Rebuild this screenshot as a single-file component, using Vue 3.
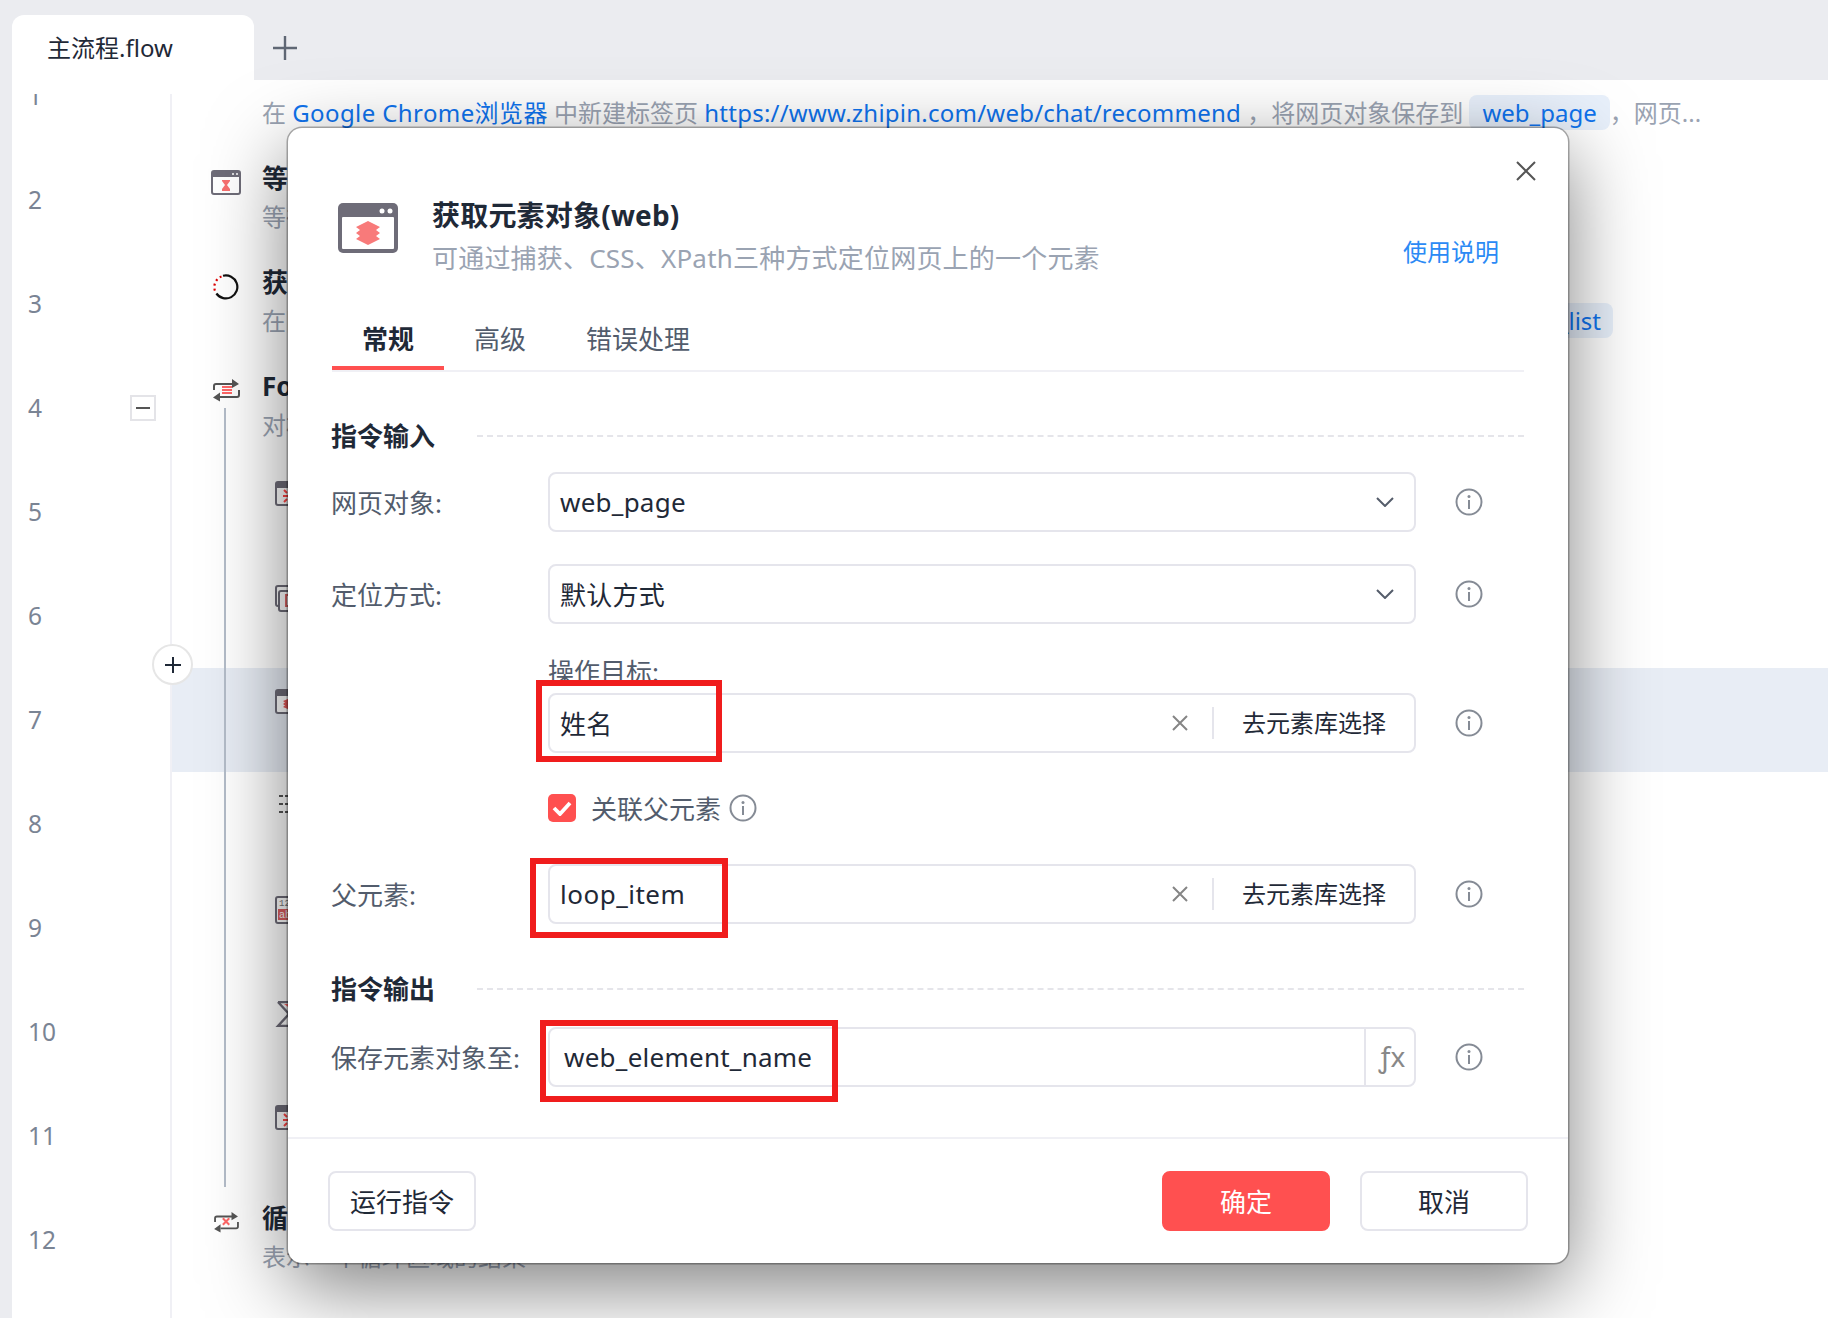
<script setup>
const rows = [
  { no: 1, icon: '', title: '打开网页', desc: '' },
  { no: 2, icon: 'wait', title: '等待元素(web)', desc: '等待元素出现' },
  { no: 3, icon: 'ring', title: '获取相似元素列表(web)', desc: '在网页中获取相似元素列表', tag: 'web_element_list' },
  { no: 4, icon: 'loop', title: 'ForEach循环相似元素(web)', desc: '对相似元素列表循环', fold: true },
  { no: 5, icon: 'click', nested: true, title: '点击元素(web)', desc: '点击元素' },
  { no: 6, icon: 'frame', nested: true, title: '切换窗口', desc: '切换窗口' },
  { no: 7, icon: 'layers', nested: true, active: true, title: '获取元素对象(web)', desc: '获取元素对象' },
  { no: 8, icon: 'list', nested: true, title: '列表', desc: '列表' },
  { no: 9, icon: 'text', nested: true, title: '获取文本', desc: '获取文本' },
  { no: 10, icon: 'sigma', nested: true, title: '求和', desc: '求和' },
  { no: 11, icon: 'click', nested: true, title: '点击元素(web)', desc: '点击元素' },
  { no: 12, icon: 'loopEnd', title: '循环结束', desc: '表示一个循环区域的结束' },
  { no: 13, icon: '', title: '', desc: '' }
]
</script>

<template>
  <div class="page">
    <header class="tabbar">
      <div class="file-tab">主流程.flow</div>
      <svg class="add-tab" width="24" height="24" viewBox="0 0 24 24"><path d="M12 0v24M0 12h24" stroke="#5f6774" stroke-width="2.4" /></svg>
    </header>

    <section class="editor">
      <div class="list">
        <span class="tree-line"></span>
        <div v-for="row in rows" :key="row.no" class="row">
          <div class="gutter">
            <span class="num">{{ row.no }}</span>
            <span v-if="row.fold" class="fold"><i></i></span>
            <span v-if="row.active" class="insert">
              <svg width="16" height="16" viewBox="0 0 16 16"><path d="M8 0v16M0 8h16" stroke="#1f2937" stroke-width="2" /></svg>
            </span>
          </div>
          <div class="cmd" :class="{ 'cmd-active': row.active, 'cmd-nested': row.nested }">
            <div class="cmd-icon">
              <svg v-if="row.icon === 'wait'" width="30" height="25" viewBox="0 0 30 25">
                <rect x="1" y="1" width="28" height="23" rx="2" fill="#fff" stroke="#6e6c78" stroke-width="2" />
                <rect x="1" y="1" width="28" height="6" fill="#6e6c78" />
                <circle cx="22" cy="4" r="1" fill="#fff" /><circle cx="26" cy="4" r="1" fill="#fff" />
                <path d="M11 10h8v1l-3 4 3 4v2h-8v-2l3-4-3-4z" fill="#f87070" />
              </svg>
              <svg v-else-if="row.icon === 'ring'" class="shift-x" width="26" height="26" viewBox="0 0 26 26">
                <path d="M10 1.800A11.500 11.500 0 1 1 3.400 19.500" fill="none" stroke="#111" stroke-width="2.200" />
                <path d="M8.500 2.500A11.500 11.500 0 0 0 2.400 18" fill="none" stroke="#d00" stroke-width="2.200" stroke-dasharray="2 3" />
              </svg>
              <svg v-else-if="row.icon === 'loop' || row.icon === 'loopEnd'" class="shift-x" :class="{ 'loop-end': row.icon === 'loopEnd' }" width="27" height="24" viewBox="0 0 27 24">
                <path d="M1 12V8a2 2 0 0 1 2-2h17M26 12v5a2 2 0 0 1-2 2H7" fill="none" stroke="#555" stroke-width="2" />
                <path d="M19 1l7 5-7 4zM7 14.500l-7 5 7 4z" fill="#555" />
                <path v-if="row.icon === 'loop'" d="M9 9h10M9 12h10M9 15h10" stroke="#f66" stroke-width="2" />
                <path v-else d="M9.500 8l7 7M16.500 8l-7 7" stroke="#f66" stroke-width="2.200" />
              </svg>
              <svg v-else-if="row.icon === 'click'" width="30" height="25" viewBox="0 0 30 25">
                <rect x="1" y="1" width="28" height="23" rx="2" fill="#fff" stroke="#6e6c78" stroke-width="2" />
                <rect x="1" y="1" width="28" height="6" fill="#6e6c78" />
                <path d="M9 9l3 3M8 15h5M9 21l3-3" stroke="#f44" stroke-width="2" />
              </svg>
              <svg v-else-if="row.icon === 'frame'" width="30" height="27" viewBox="0 0 30 27">
                <rect x="1" y="1" width="26" height="20" rx="2" fill="#fff" stroke="#6e6c78" stroke-width="2" />
                <rect x="4" y="6" width="25" height="20" rx="2" fill="#fff" stroke="#6e6c78" stroke-width="2" />
                <rect x="11" y="10" width="8" height="11" fill="none" stroke="#d66" stroke-width="2" />
              </svg>
              <svg v-else-if="row.icon === 'layers'" width="30" height="25" viewBox="0 0 30 25">
                <rect x="1" y="1" width="28" height="23" rx="2" fill="#fff" stroke="#6e6c78" stroke-width="2" />
                <rect x="1" y="1" width="28" height="6" fill="#6e6c78" />
                <path d="M15 9l7 3-2 1.500 2 1.500-2 1.500 2 1.500-7 3-7-3 2-1.500-2-1.500 2-1.500-2-1.500z" fill="#e85a5a" />
              </svg>
              <svg v-else-if="row.icon === 'list'" width="30" height="22" viewBox="0 0 30 22">
                <path d="M4 3h4M10 3h18M4 11h4M10 11h18M4 19h4M10 19h18" stroke="#555" stroke-width="2" />
              </svg>
              <svg v-else-if="row.icon === 'text'" class="icon-up" width="30" height="28" viewBox="0 0 30 28">
                <rect x="1" y="1" width="28" height="26" rx="2" fill="#fff" stroke="#6e6c78" stroke-width="2" />
                <rect x="3" y="13" width="24" height="11" fill="#dc5f5f" />
                <text x="4" y="10" font-size="9" fill="#777" font-family="Liberation Mono, monospace">123</text>
                <text x="4" y="22" font-size="10" fill="#fff" font-family="Liberation Mono, monospace">abc</text>
              </svg>
              <svg v-else-if="row.icon === 'sigma'" width="30" height="26" viewBox="0 0 30 26">
                <path d="M3 1h25M3 1l11 12L3 25h25" fill="none" stroke="#6e6c78" stroke-width="2.400" />
                <path d="M9 3h12l-5 5z" fill="#f66" />
              </svg>
            </div>
            <div class="cmd-text">
              <div class="cmd-title">{{ row.title }}</div>
              <div v-if="row.no === 1" class="cmd-desc">
                在 <a class="app-link">Google Chrome浏览器</a> 中新建标签页 <a>https://www.zhipin.com/web/chat/recommend</a> ，将网页对象保存到
                <span class="var var-wide">web_page</span>，网页...
              </div>
              <div v-else class="cmd-desc" :class="{ 'desc-wide': row.tag }">
                <span>{{ row.desc }}</span>
                <span v-if="row.tag" class="var">{{ row.tag }}</span>
              </div>
            </div>
          </div>
        </div>
      </div>
    </section>

    <div class="dialog">
      <svg class="close" width="20" height="20" viewBox="0 0 20 20"><path d="M1 1l18 18M19 1L1 19" stroke="#555" stroke-width="2" /></svg>

      <div class="dialog-head">
        <svg class="dialog-icon" width="60" height="50" viewBox="0 0 60 50">
          <rect width="60" height="50" rx="5" fill="#6e6c78" />
          <rect x="4" y="14" width="52" height="32" rx="1" fill="#fff" />
          <circle cx="44" cy="8" r="2.500" fill="#fff" /><circle cx="52" cy="8" r="2.500" fill="#fff" />
          <path d="M30 18l12 6-4 3 4 3-4 3 4 3-12 6-12-6 4-3-4-3 4-3-4-3z" fill="#f87a7a" />
        </svg>
        <div class="dialog-titles">
          <div class="dialog-title">获取元素对象(web)</div>
          <div class="dialog-sub">可通过捕获、CSS、XPath三种方式定位网页上的一个元素</div>
        </div>
        <a class="help">使用说明</a>
      </div>

      <div class="dialog-body">
        <div class="tabs">
          <div class="tab tab-on">常规</div>
          <div class="tab">高级</div>
          <div class="tab">错误处理</div>
        </div>

        <div class="section section-first"><span>指令输入</span><i></i></div>

        <div class="field field-first">
          <label>网页对象:</label>
          <div class="control">
            <span class="value">web_page</span>
            <svg class="chevron" width="18" height="10" viewBox="0 0 18 10"><path d="M1 1l8 8 8-8" fill="none" stroke="#555d6b" stroke-width="2" /></svg>
          </div>
          <svg class="info" width="28" height="28" viewBox="0 0 28 28"><circle cx="14" cy="14" r="12.500" fill="none" stroke="#858b95" stroke-width="2" /><path d="M14 12v9" stroke="#858b95" stroke-width="2" /><circle cx="14" cy="8.500" r="1.500" fill="#858b95" /></svg>
        </div>

        <div class="field field-second">
          <label>定位方式:</label>
          <div class="control">
            <span class="value">默认方式</span>
            <svg class="chevron" width="18" height="10" viewBox="0 0 18 10"><path d="M1 1l8 8 8-8" fill="none" stroke="#555d6b" stroke-width="2" /></svg>
          </div>
          <svg class="info" width="28" height="28" viewBox="0 0 28 28"><circle cx="14" cy="14" r="12.500" fill="none" stroke="#858b95" stroke-width="2" /><path d="M14 12v9" stroke="#858b95" stroke-width="2" /><circle cx="14" cy="8.500" r="1.500" fill="#858b95" /></svg>
        </div>

        <div class="stack-label">操作目标:</div>
        <div class="field field-tight">
          <label></label>
          <div class="control">
            <span class="value">姓名</span>
            <svg class="clear" width="16" height="16" viewBox="0 0 16 16"><path d="M1 1l14 14M15 1L1 15" stroke="#858585" stroke-width="2" /></svg>
            <span class="pick">去元素库选择</span>
          </div>
          <svg class="info" width="28" height="28" viewBox="0 0 28 28"><circle cx="14" cy="14" r="12.500" fill="none" stroke="#858b95" stroke-width="2" /><path d="M14 12v9" stroke="#858b95" stroke-width="2" /><circle cx="14" cy="8.500" r="1.500" fill="#858b95" /></svg>
        </div>

        <div class="check-row">
          <span class="check">
            <svg width="20" height="16" viewBox="0 0 20 16"><path d="M2 8l6 6L18 3" fill="none" stroke="#fff" stroke-width="3.800" /></svg>
          </span>
          <span class="check-text">关联父元素</span>
          <svg width="28" height="28" viewBox="0 0 28 28"><circle cx="14" cy="14" r="12.500" fill="none" stroke="#858b95" stroke-width="2" /><path d="M14 12v9" stroke="#858b95" stroke-width="2" /><circle cx="14" cy="8.500" r="1.500" fill="#858b95" /></svg>
        </div>

        <div class="field field-parent">
          <label>父元素:</label>
          <div class="control">
            <span class="value value-loop">loop_item</span>
            <svg class="clear" width="16" height="16" viewBox="0 0 16 16"><path d="M1 1l14 14M15 1L1 15" stroke="#858585" stroke-width="2" /></svg>
            <span class="pick">去元素库选择</span>
          </div>
          <svg class="info" width="28" height="28" viewBox="0 0 28 28"><circle cx="14" cy="14" r="12.500" fill="none" stroke="#858b95" stroke-width="2" /><path d="M14 12v9" stroke="#858b95" stroke-width="2" /><circle cx="14" cy="8.500" r="1.500" fill="#858b95" /></svg>
        </div>

        <div class="section section-out"><span>指令输出</span><i></i></div>

        <div class="field field-output">
          <label>保存元素对象至:</label>
          <div class="control control-fx">
            <span class="value value-out">web_element_name</span>
            <span class="fx">ƒx</span>
          </div>
          <svg class="info" width="28" height="28" viewBox="0 0 28 28"><circle cx="14" cy="14" r="12.500" fill="none" stroke="#858b95" stroke-width="2" /><path d="M14 12v9" stroke="#858b95" stroke-width="2" /><circle cx="14" cy="8.500" r="1.500" fill="#858b95" /></svg>
        </div>
      </div>

      <div class="dialog-foot">
        <button class="btn btn-run">运行指令</button>
        <button class="btn btn-ok">确定</button>
        <button class="btn btn-cancel">取消</button>
      </div>
    </div>

    <span class="mark mark-a"></span>
    <span class="mark mark-b"></span>
    <span class="mark mark-c"></span>
  </div>
</template>

<style scoped>
.page {
  position: relative;
  display: flex;
  flex-direction: column;
  width: 1828px;
  height: 1318px;
  overflow: hidden;
  background: #ebecf0;
  color: #1f2937;
  font-family: "Noto Sans", "Noto Sans CJK SC", sans-serif;
  font-size: 26px;
}

.tabbar {
  display: flex;
  align-items: center;
  flex-shrink: 0;
  height: 65px;
  margin-top: 15px;
  padding-left: 12px;
}

.file-tab {
  width: 242px;
  height: 65px;
  padding-left: 35px;
  box-sizing: border-box;
  background: #fff;
  border-radius: 12px 12px 0 0;
  font-size: 24px;
  line-height: 66px;
}

.add-tab {
  margin: 0 0 0 19px;
}

.editor {
  flex: 1;
  margin-left: 12px;
  padding-top: 14px;
  overflow: hidden;
  background: #fff;
}

.list {
  position: relative;
  height: 1224px;
  overflow: hidden;
}

.list > .row:first-of-type {
  margin-top: -50px;
}

.tree-line {
  position: absolute;
  z-index: 1;
  left: 212px;
  top: 314px;
  width: 2px;
  height: 779px;
  background: #b4bdc9;
}

.row {
  display: flex;
  height: 104px;
}

.gutter {
  position: relative;
  display: flex;
  align-items: center;
  justify-content: space-between;
  flex-shrink: 0;
  width: 160px;
  padding: 0 14px 0 16px;
  box-sizing: border-box;
  border-right: 2px solid #f0f0f5;
}

.num {
  margin-top: -2px;
  color: #7a8494;
  font-size: 24.500px;
}

.fold {
  display: flex;
  align-items: center;
  justify-content: center;
  width: 26px;
  height: 26px;
  box-sizing: border-box;
  border: 2px solid #e4e4e8;
}

.fold i {
  width: 14px;
  height: 2px;
  background: #555;
}

.insert {
  position: absolute;
  z-index: 2;
  right: -23px;
  top: -24px;
  display: flex;
  align-items: center;
  justify-content: center;
  width: 41px;
  height: 41px;
  box-sizing: border-box;
  border: 2px solid #e6e6e6;
  border-radius: 50%;
  background: #fff;
}

.cmd {
  display: flex;
  flex: 1;
  min-width: 0;
  padding-left: 39px;
}

.cmd-nested {
  padding-left: 103px;
}

.cmd-active {
  background: #e8edf5;
}

.cmd-icon {
  flex-shrink: 0;
  width: 30px;
  margin: 22px 21px 0 0;
}

.cmd-nested .cmd-icon {
  margin-top: 21px;
}

.cmd-icon svg {
  display: block;
}

.cmd-icon .shift-x {
  margin-left: 2px;
}

.cmd-icon .loop-end {
  height: 22px;
  margin-top: 1px;
}

.cmd-icon .icon-up {
  margin-top: -1px;
}

.cmd-text {
  padding-top: 11px;
  white-space: nowrap;
}

.cmd-title {
  height: 38px;
  font-weight: 700;
  font-size: 26px;
  line-height: 38px;
}

.cmd-desc {
  margin-top: 2px;
  color: #9aa3b2;
  font-size: 24px;
  line-height: 36px;
}

.cmd-desc a {
  color: #0f73ee;
  letter-spacing: 0.23px;
}

.cmd-desc .app-link {
  letter-spacing: 0.4px;
}

.desc-wide {
  display: flex;
  justify-content: space-between;
  width: 1351px;
}

.var {
  display: inline-block;
  height: 35px;
  padding: 0 12px;
  border-radius: 8px;
  background: #e8f0fb;
  color: #0f73ee;
  line-height: 35px;
}

.var-wide {
  padding: 0 13px;
}

.dialog {
  position: absolute;
  z-index: 3;
  left: 288px;
  top: 128px;
  display: flex;
  flex-direction: column;
  width: 1280px;
  height: 1135px;
  box-sizing: border-box;
  padding-top: 68px;
  border-radius: 14px;
  background: #fff;
  box-shadow: 0 0 0 1.500px rgba(0, 0, 0, 0.3), 0 24px 80px rgba(0, 0, 0, 0.5);
}

.close {
  position: absolute;
  top: 33px;
  right: 32px;
}

.dialog-head {
  display: flex;
  padding: 0 69px 0 50px;
}

.dialog-icon {
  flex-shrink: 0;
  margin: 7px 34px 0 0;
}

.dialog-title {
  font-size: 28px;
  font-weight: 700;
  letter-spacing: 0.2px;
  line-height: 38px;
}

.dialog-sub {
  margin-top: 5px;
  color: #9aa3b2;
  font-size: 26px;
  letter-spacing: 0.2px;
  line-height: 38px;
}

.help {
  align-self: flex-end;
  margin: 0 0 6px auto;
  color: #2b8af5;
  font-size: 24px;
  line-height: 38px;
}

.dialog-body {
  margin: 32px 44px 0 44px;
}

.tabs {
  display: flex;
  border-bottom: 2px solid #f0f0f5;
}

.tab {
  height: 61px;
  padding: 0 30px;
  box-sizing: border-box;
  color: #525c6c;
  line-height: 60px;
}

.tab-on {
  border-bottom: 4px solid #ff5050;
  color: #1f2937;
  font-weight: 700;
}

.section {
  display: flex;
  align-items: center;
  height: 38px;
  margin-top: 45px;
  font-weight: 700;
}

.section-out {
  margin-top: 46px;
}

.section span {
  margin: -3px 0 0 -1px;
}

.section i {
  flex: 1;
  margin-left: 42px;
  border-top: 2px dashed #e5e5ea;
}

.field {
  display: flex;
  align-items: center;
  margin-top: 33px;
}

.field-first {
  margin-top: 17px;
}

.field-second {
  margin-top: 32px;
}

.field-tight {
  margin-top: 2px;
}

.field-parent {
  margin-top: 42px;
}

.field-output {
  margin-top: 19px;
}

.field label {
  flex-shrink: 0;
  width: 217px;
  margin-left: -1px;
  color: #525c6c;
}

.control {
  display: flex;
  align-items: center;
  flex-shrink: 0;
  width: 868px;
  height: 60px;
  padding-left: 10px;
  box-sizing: border-box;
  border: 2px solid #e5e5ec;
  border-radius: 8px;
}

.value {
  flex: 1;
  letter-spacing: 0.25px;
}

.value-loop {
  letter-spacing: 0.5px;
}

.value-out {
  padding-left: 4px;
}

.chevron {
  margin-right: 20px;
}

.clear {
  margin-right: 24px;
}

.pick {
  width: 202px;
  padding-left: 30px;
  box-sizing: border-box;
  background: linear-gradient(#e5e5ec, #e5e5ec) left center / 2px 32px no-repeat;
  font-size: 24px;
  line-height: 56px;
}

.fx {
  width: 50px;
  height: 56px;
  padding-left: 4px;
  box-sizing: border-box;
  border-left: 2px solid #e5e5ec;
  color: #888;
  font-family: "Noto Sans", sans-serif;
  font-size: 28px;
  line-height: 54px;
  text-align: center;
}

.info {
  flex-shrink: 0;
  margin-left: 39px;
}

.stack-label {
  margin: 29px 0 0 216px;
  color: #525c6c;
  line-height: 38px;
}

.check-row {
  display: flex;
  align-items: center;
  height: 28px;
  margin: 41px 0 0 216px;
  color: #525c6c;
}

.check {
  display: flex;
  align-items: center;
  justify-content: center;
  width: 28px;
  height: 28px;
  margin-right: 15px;
  border-radius: 5px;
  background: #ff5050;
}

.check-text {
  margin-right: 8px;
}

.dialog-foot {
  display: flex;
  margin-top: auto;
  height: 126px;
  padding: 32px 40px 0;
  box-sizing: border-box;
  border-top: 2px solid #f0f0f5;
}

.btn {
  height: 60px;
  padding: 0;
  border: 2px solid #e5e5ec;
  border-radius: 8px;
  background: #fff;
  color: #1f2937;
  font: inherit;
}

.btn-run {
  width: 148px;
  margin-right: auto;
}

.btn-ok {
  width: 168px;
  margin-right: 30px;
  border-color: #ff5050;
  background: #ff5050;
  color: #fff;
}

.btn-cancel {
  width: 168px;
}

.mark {
  position: absolute;
  z-index: 4;
  box-sizing: border-box;
  border: 6px solid #f01d1d;
}

.mark-a {
  left: 536px;
  top: 680px;
  width: 186px;
  height: 82px;
}

.mark-b {
  left: 530px;
  top: 858px;
  width: 198px;
  height: 80px;
}

.mark-c {
  left: 540px;
  top: 1020px;
  width: 298px;
  height: 82px;
}
</style>
